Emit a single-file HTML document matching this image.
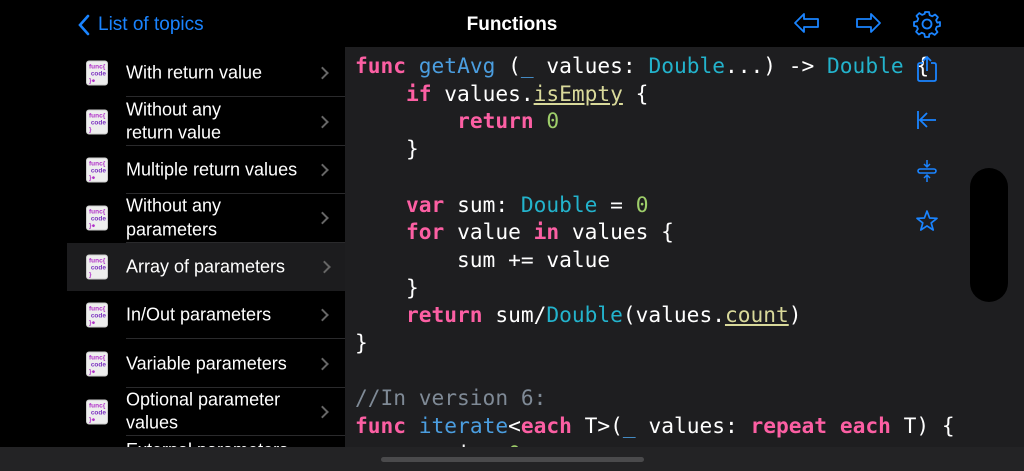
<!DOCTYPE html>
<html><head><meta charset="utf-8"><style>
*{margin:0;padding:0;box-sizing:border-box}
body{width:1024px;height:471px;background:#000;overflow:hidden;position:relative;font-family:"Liberation Sans",sans-serif;color:#fff}
.top{position:absolute;left:0;top:0;width:1024px;height:47px;background:#000}
.back{position:absolute;left:98px;top:14px;color:#1a84ff;font-size:19px}
.title{position:absolute;left:0;width:1024px;text-align:center;top:14px;font-size:19px;font-weight:bold}
.list{position:absolute;left:0;top:49px;width:345px;height:398px;background:#000;overflow:hidden}
.row{position:relative;height:48.4px}
.row.sel{background:#1c1c1e;margin-left:67px}
.row.sel .ic{left:19px}.row.sel .t{left:59px}.row.sel .chev{right:16px}
.row .t{position:absolute;left:126px;top:50%;transform:translateY(-50%);font-size:18px;line-height:23.5px}
.row .sep{position:absolute;left:126px;right:0;bottom:0;height:1px;background:#2a2a2c}
.row .chev{position:absolute;right:18px;top:50%;width:9px;height:9px;border-right:2px solid #666;border-top:2px solid #666;transform:translateY(-50%) rotate(45deg)}
.ic{position:absolute;left:86px;top:50%;transform:translateY(-50%);width:22px;height:25px;background:#eee;border-radius:3px;font-size:6.5px;font-weight:bold;line-height:7px;color:#b030c8;padding:2px 1px 0 2px;font-family:"Liberation Sans",sans-serif;border:1px solid #ccc}
.ic i{font-style:normal;color:#7a30c0}
.code{position:absolute;left:345px;top:47px;width:679px;height:400px;background:#1e1e20;overflow:hidden}
pre{position:absolute;left:355px;top:52px;font-family:"DejaVu Sans Mono",monospace;font-size:21.2px;line-height:27.7px;color:#fff}
.k{color:#fc5fa3;font-weight:bold}.f{color:#4b9ee0}.ty{color:#23b3cc}.n{color:#9ece6a}.p{color:#d9d99a;text-decoration:underline}.c{color:#7f8a96}
.bot{position:absolute;left:0;top:447px;width:1024px;height:24px;background:#232325}
.bar{position:absolute;left:381px;top:457px;width:263px;height:5px;border-radius:3px;background:#4a4a4c}
.pill{position:absolute;left:970px;top:168px;width:38px;height:134px;border-radius:19px;background:#000}
svg{position:absolute}
</style></head><body>
<div class="top">
<svg style="left:77px;top:14px" width="14" height="22" viewBox="0 0 14 22"><path d="M11 2 L3 11 L11 20" stroke="#1a84ff" stroke-width="2.6" fill="none" stroke-linecap="round"/></svg>
<div class="back">List of topics</div>
<div class="title">Functions</div>
<svg style="left:793px;top:11px" width="28" height="24" viewBox="0 0 28 24"><path d="M2 12 L11 3 L11 8 L25 8 L25 16 L11 16 L11 21 Z" stroke="#1a84ff" stroke-width="1.8" fill="none" stroke-linejoin="round"/></svg>
<svg style="left:854px;top:11px" width="28" height="24" viewBox="0 0 28 24"><path d="M26 12 L17 3 L17 8 L3 8 L3 16 L17 16 L17 21 Z" stroke="#1a84ff" stroke-width="1.8" fill="none" stroke-linejoin="round"/></svg>
<svg style="left:913px;top:10px" width="28" height="28" viewBox="0 0 28 28"><g stroke="#1a84ff" stroke-width="1.8" fill="none"><circle cx="14" cy="14" r="4.5"/><path d="M12 2h4l.7 3.2 2.6 1.1 2.8-1.8 2.8 2.8-1.8 2.8 1.1 2.6L27 12v4l-3.2.7-1.1 2.6 1.8 2.8-2.8 2.8-2.8-1.8-2.6 1.1L16 27h-4l-.7-3.2-2.6-1.1-2.8 1.8-2.8-2.8 1.8-2.8-1.1-2.6L1 16v-4l3.2-.7 1.1-2.6-1.8-2.8 2.8-2.8 2.8 1.8 2.6-1.1Z" stroke-linejoin="round"/></g></svg>
</div>
<div class="list">
<div class="row"><div class="ic">func{<br>&nbsp;<i>code</i><br>}●</div><div class="t">With return value</div><div class="chev"></div><div class="sep"></div></div>
<div class="row"><div class="ic">func{<br>&nbsp;<i>code</i><br>}</div><div class="t">Without any<br>return value</div><div class="chev"></div><div class="sep"></div></div>
<div class="row"><div class="ic">func{<br>&nbsp;<i>code</i><br>}●</div><div class="t">Multiple return values</div><div class="chev"></div><div class="sep"></div></div>
<div class="row"><div class="ic">func{<br>&nbsp;<i>code</i><br>}●</div><div class="t">Without any<br>parameters</div><div class="chev"></div><div class="sep"></div></div>
<div class="row sel"><div class="ic">func{<br>&nbsp;<i>code</i><br>}</div><div class="t">Array of parameters</div><div class="chev"></div></div>
<div class="row"><div class="ic">func{<br>&nbsp;<i>code</i><br>}●</div><div class="t">In/Out parameters</div><div class="chev"></div><div class="sep"></div></div>
<div class="row"><div class="ic">func{<br>&nbsp;<i>code</i><br>}●</div><div class="t">Variable parameters</div><div class="chev"></div><div class="sep"></div></div>
<div class="row"><div class="ic">func{<br>&nbsp;<i>code</i><br>}●</div><div class="t">Optional parameter<br>values</div><div class="chev"></div><div class="sep"></div></div>
<div class="row"><div class="t" style="top:3px;transform:none">External parameters</div></div>
</div>
<div class="code"></div>
<pre><span class="k">func</span> <span class="f">getAvg</span> (<span class="f">_</span> values: <span class="ty">Double</span>...) -&gt; <span class="ty">Double</span> {
    <span class="k">if</span> values.<span class="p">isEmpty</span> {
        <span class="k">return</span> <span class="n">0</span>
    }

    <span class="k">var</span> sum: <span class="ty">Double</span> = <span class="n">0</span>
    <span class="k">for</span> value <span class="k">in</span> values {
        sum += value
    }
    <span class="k">return</span> sum/<span class="ty">Double</span>(values.<span class="p">count</span>)
}

<span class="c">//In version 6:</span>
<span class="k">func</span> <span class="f">iterate</span>&lt;<span class="k">each</span> T&gt;(<span class="f">_</span> values: <span class="k">repeat</span> <span class="k">each</span> T) {
    <span class="k">var</span> i = <span class="n">0</span></pre>
<svg style="left:914px;top:54px" width="26" height="30" viewBox="0 0 26 30"><path d="M9 9 H6 Q4 9 4 11 V25 Q4 27 6 27 H20 Q22 27 22 25 V11 Q22 9 20 9 H17 M13 3 V17 M9 7 L13 3 L17 7" stroke="#1a84ff" stroke-width="1.8" fill="none"/></svg>
<svg style="left:915px;top:108px" width="24" height="24" viewBox="0 0 24 24"><path d="M3 3 V21 M21 12 H5 M12 5 L5 12 L12 19" stroke="#1a84ff" stroke-width="1.8" fill="none"/></svg>
<svg style="left:915px;top:158px" width="24" height="26" viewBox="0 0 24 26"><path d="M12 2 V9 M9 6 L12 9 L15 6 M12 24 V17 M9 20 L12 17 L15 20" stroke="#1a84ff" stroke-width="1.5" fill="none"/><rect x="3" y="11" width="18" height="4" rx="2" stroke="#1a84ff" stroke-width="1.6" fill="none"/></svg>
<svg style="left:915px;top:209px" width="24" height="24" viewBox="0 0 24 24"><path d="M12 2 L14.6 9 L22 9.3 L16.2 13.9 L18.2 21 L12 16.9 L5.8 21 L7.8 13.9 L2 9.3 L9.4 9 Z" stroke="#1a84ff" stroke-width="1.7" fill="none" stroke-linejoin="round"/></svg>
<div class="pill"></div>
<div class="bot"></div>
<div class="bar"></div>
</body></html>
